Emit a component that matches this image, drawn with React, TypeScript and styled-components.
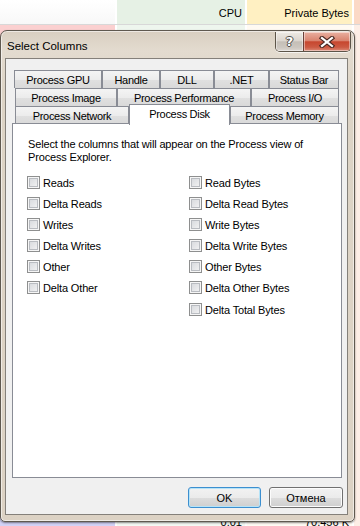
import React from "react";
import styled, { createGlobalStyle } from "styled-components";

const GlobalStyle = createGlobalStyle`
  html, body {
    margin: 0;
    padding: 0;
  }
  body {
    background: #fff;
    font-family: "Liberation Sans", Arial, sans-serif;
  }
`;

const Screen = styled.div`
  position: relative;
  width: 360px;
  height: 526px;
  overflow: hidden;
  background: #fff;
`;

/* ---------- process list behind the dialog ---------- */

const List = styled.div`
  display: flex;
  flex-direction: column;
  height: 100%;
`;

const ListRow = styled.div<{ $h?: number; $head?: boolean }>`
  display: grid;
  grid-template-columns: 117px 130px 107px 1fr;
  flex: ${(p) => (p.$h ? "none" : "1")};
  height: ${(p) => (p.$h ? `${p.$h}px` : "auto")};
  border-bottom: ${(p) => (p.$head ? "1px solid #d8d8d8" : "none")};
`;

const Cell = styled.div<{ $bg: string; $sep?: boolean }>`
  background: ${(p) => p.$bg};
  border-right: ${(p) => (p.$sep ? "2px solid #fff" : "none")};
  display: flex;
  align-items: center;
  justify-content: flex-end;
  padding-right: 3px;
  font-size: 11px;
  color: #000;
  white-space: nowrap;
  overflow: hidden;
`;

const HeadCell = styled(Cell)`
  font-size: 11px;
  padding-right: 3px;
  padding-top: 1px;
`;

/* ---------- dialog ---------- */

const Dialog = styled.div`
  position: absolute;
  left: 0;
  top: 30px;
  width: 355px;
  height: 492px;
  box-sizing: border-box;
  border: 1px solid #5f5950;
  border-radius: 7px 7px 5px 5px;
  background: linear-gradient(to bottom, #d9cfc1 0px, #e3dbcf 20px, #ddd4c6 60px, #dcd2c4 100%);
  box-shadow: inset 0 0 0 1px rgba(255, 255, 255, 0.55), 0 1px 2px rgba(0, 0, 0, 0.45);
  display: flex;
  flex-direction: column;
`;

const TitleBar = styled.div`
  height: 27px;
  flex: none;
  display: flex;
  align-items: flex-start;
  justify-content: space-between;
`;

const Title = styled.div`
  margin: 8px 0 0 6px;
  font-size: 11.5px;
  line-height: 14px;
  color: #000;
`;

const CaptionGroup = styled.div`
  display: flex;
  margin: 1px 3px 0 0;
  border: 1px solid #5d5549;
  border-top: none;
  border-radius: 0 0 5px 5px;
  overflow: hidden;
  box-shadow: 0 1px 0 rgba(255, 255, 255, 0.7);
`;

const CaptionButton = styled.div<{ $close?: boolean }>`
  width: ${(p) => (p.$close ? "46px" : "27px")};
  height: 19px;
  display: flex;
  align-items: center;
  justify-content: center;
  border-left: ${(p) => (p.$close ? "1px solid #6b4038" : "none")};
  box-shadow: inset 0 0 0 1px rgba(255, 255, 255, 0.45);
  background: ${(p) =>
    p.$close
      ? "linear-gradient(to bottom, #e9b0a1 0%, #d98470 45%, #c7472f 52%, #cc5a43 80%, #dc8c78 100%)"
      : "linear-gradient(to bottom, #eeeae4 0%, #dcd6cf 45%, #c5bfb7 52%, #ccc6bf 80%, #dcd7d1 100%)"};
`;

const HelpGlyph = styled.span`
  font-family: "DejaVu Sans", sans-serif;
  font-weight: bold;
  font-size: 13px;
  color: #fff;
  line-height: 1;
  text-shadow: 1px 0 0 #4d4a46, -1px 0 0 #4d4a46, 0 1px 0 #4d4a46, 0 -1px 0 #4d4a46;
`;

const Client = styled.div`
  flex: 1;
  margin: 0 6px 6px 4px;
  border: 1px solid #84807a;
  background: #f0f0f0;
  display: flex;
  flex-direction: column;
  padding: 11px 5px 6px 6px;
  min-height: 0;
`;

const TabStrip = styled.div`
  display: flex;
  flex-direction: column;
  margin-left: 2px;
  flex: none;
`;

const TabRow = styled.div<{ $shift?: number }>`
  display: flex;
  height: 18px;
  margin-left: ${(p) => p.$shift ?? 0}px;
`;

const Tab = styled.div<{ $w: number; $active?: boolean }>`
  width: ${(p) => p.$w}px;
  box-sizing: border-box;
  height: ${(p) => (p.$active ? "21px" : "18px")};
  margin-top: ${(p) => (p.$active ? "-2px" : "0")};
  position: relative;
  z-index: ${(p) => (p.$active ? 3 : 0)};
  border: 1px solid #898c95;
  border-bottom: none;
  background: ${(p) =>
    p.$active
      ? "#fff"
      : "linear-gradient(to bottom, #f4f4f4 0%, #ececec 50%, #e0e0e0 52%, #d9d9d9 100%)"};
  display: flex;
  align-items: ${(p) => (p.$active ? "flex-start" : "center")};
  padding-top: ${(p) => (p.$active ? "3px" : "0")};
  justify-content: center;
  font-size: 11px;
  letter-spacing: -0.3px;
  color: #000;
  white-space: nowrap;
`;

const Panel = styled.div`
  position: relative;
  z-index: 1;
  flex: 1;
  margin-top: -1px;
  background: #fff;
  border: 1px solid #898c95;
  padding: 14px 14px 0 14px;
`;

const Intro = styled.p`
  margin: 0 0 0 1px;
  font-size: 11px;
  line-height: 13px;
  letter-spacing: -0.15px;
  color: #000;
`;

const ColumnsGrid = styled.div`
  display: grid;
  grid-template-columns: 162px 1fr;
  margin-top: 8px;
`;

const CheckColumn = styled.div`
  display: flex;
  flex-direction: column;
`;

const CheckRow = styled.label<{ $extra?: number }>`
  display: flex;
  align-items: center;
  gap: 3px;
  height: 21px;
  margin-top: ${(p) => p.$extra ?? 0}px;
  font-size: 11px;
  letter-spacing: -0.15px;
  color: #000;
`;

const Box = styled.span`
  width: 13px;
  height: 13px;
  box-sizing: border-box;
  flex: none;
  border: 1px solid #8e8f8f;
  background: linear-gradient(135deg, #d3d6da 0%, #e6e7e9 55%, #f7f7f7 100%);
  box-shadow: inset 0 0 0 1px #f6f6f6, inset 0 0 0 2px #b9bcc1;
`;

const ButtonBar = styled.div`
  display: flex;
  justify-content: flex-end;
  gap: 8px;
  margin: 9px -1px 0 0;
  flex: none;
`;

const Button = styled.div<{ $default?: boolean }>`
  width: ${(p) => (p.$default ? "73px" : "74px")};
  height: 21px;
  box-sizing: border-box;
  border: 1px solid ${(p) => (p.$default ? "#3c8fd0" : "#707070")};
  border-radius: 3px;
  background: linear-gradient(to bottom, #f2f2f2 0%, #ebebeb 50%, #dddddd 51%, #cfcfcf 100%);
  box-shadow: inset 0 0 0 1px ${(p) => (p.$default ? "#b6e3f7" : "#fcfcfc")};
  display: flex;
  align-items: center;
  justify-content: center;
  font-size: 11px;
  color: #000;
`;

const diskColumns = ["Reads", "Delta Reads", "Writes", "Delta Writes", "Other", "Delta Other"];
const byteColumns = [
  "Read Bytes",
  "Delta Read Bytes",
  "Write Bytes",
  "Delta Write Bytes",
  "Other Bytes",
  "Delta Other Bytes",
  "Delta Total Bytes",
];

const tabRows = [
  { shift: 0, tabs: [["Process GPU", 88], ["Handle", 58], ["DLL", 54], [".NET", 55], ["Status Bar", 70]] },
  { shift: 1, tabs: [["Process Image", 102], ["Process Performance", 134], ["Process I/O", 88]] },
  { shift: 1, tabs: [["Process Network", 114], ["Process Disk", 101], ["Process Memory", 109]] },
] as const;

const CloseIcon = () => (
  <svg width="16" height="12" viewBox="0 0 16 12">
    <path d="M3 2 L13 10 M13 2 L3 10" stroke="#4b2a24" strokeWidth="4.4" strokeLinecap="square" />
    <path d="M3 2 L13 10 M13 2 L3 10" stroke="#fff" strokeWidth="2.2" strokeLinecap="square" />
  </svg>
);

export default function App() {
  return (
    <Screen>
      <GlobalStyle />
      <List>
        <ListRow $h={24} $head>
          <HeadCell $bg="linear-gradient(#ffffff, #f8f8f8)" $sep />
          <HeadCell $bg="#e6f1e5" $sep>CPU</HeadCell>
          <HeadCell $bg="#fff0c2" $sep>Private Bytes</HeadCell>
          <HeadCell $bg="#fbd9c6" />
        </ListRow>
        <ListRow $h={17}>
          <Cell $bg="#fbd0d0" $sep />
          <Cell $bg="#eef6ee" $sep />
          <Cell $bg="#fffaf2" $sep>2,956 K</Cell>
          <Cell $bg="#fdeee6" />
        </ListRow>
        <ListRow>
          <Cell $bg="#fff" $sep />
          <Cell $bg="#f4f9f4" $sep />
          <Cell $bg="#fffbf4" $sep />
          <Cell $bg="#fdeee6" />
        </ListRow>
        <ListRow $h={10}>
          <Cell $bg="#d2d2f6" $sep />
          <Cell $bg="#f4f9f4" $sep style={{ alignItems: "flex-start" }}>0.01</Cell>
          <Cell $bg="#fffbf4" $sep style={{ alignItems: "flex-start" }}>70,456 K</Cell>
          <Cell $bg="#fdeee6" />
        </ListRow>
      </List>

      <Dialog>
        <TitleBar>
          <Title>Select Columns</Title>
          <CaptionGroup>
            <CaptionButton>
              <HelpGlyph>?</HelpGlyph>
            </CaptionButton>
            <CaptionButton $close>
              <CloseIcon />
            </CaptionButton>
          </CaptionGroup>
        </TitleBar>

        <Client>
          <TabStrip>
            {tabRows.map((row, i) => (
              <TabRow key={i} $shift={row.shift}>
                {row.tabs.map(([label, w]) => (
                  <Tab key={label} $w={w} $active={label === "Process Disk"}>
                    {label}
                  </Tab>
                ))}
              </TabRow>
            ))}
          </TabStrip>

          <Panel>
            <Intro>
              Select the columns that will appear on the Process view of
              <br />
              Process Explorer.
            </Intro>
            <ColumnsGrid>
              <CheckColumn>
                {diskColumns.map((c) => (
                  <CheckRow key={c}>
                    <Box />
                    {c}
                  </CheckRow>
                ))}
              </CheckColumn>
              <CheckColumn>
                {byteColumns.map((c, i) => (
                  <CheckRow key={c} $extra={i === 6 ? 1 : 0}>
                    <Box />
                    {c}
                  </CheckRow>
                ))}
              </CheckColumn>
            </ColumnsGrid>
          </Panel>

          <ButtonBar>
            <Button $default>OK</Button>
            <Button>Отмена</Button>
          </ButtonBar>
        </Client>
      </Dialog>
    </Screen>
  );
}
